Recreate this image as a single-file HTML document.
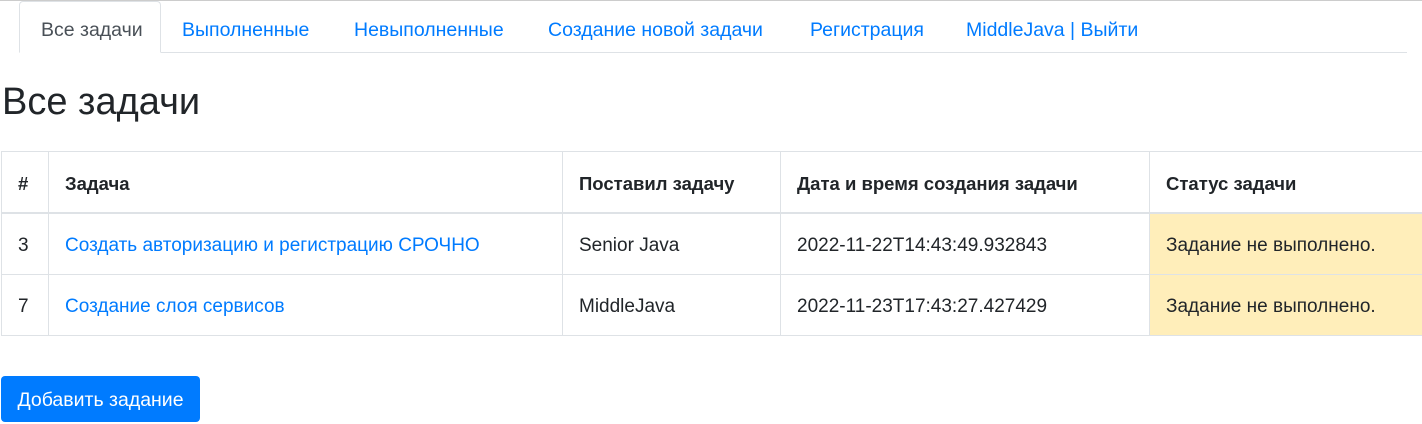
<!DOCTYPE html>
<html><head><meta charset="utf-8"><style>
body{margin:0;width:1422px;height:424px;overflow:hidden;background:#fff;font-family:"Liberation Sans","DejaVu Sans",sans-serif;color:#212529;font-size:16px;position:relative}
.topline{position:absolute;left:0;top:0;width:1422px;height:1px;background:#ccc}
.navb{position:absolute;left:19px;top:52px;width:1388px;height:1px;background:#dee2e6}
.act{position:absolute;left:19px;top:1px;width:142px;height:52px;border:1px solid #dee2e6;border-bottom:1px solid #fff;border-radius:4px 4px 0 0;background:#fff;box-sizing:border-box}
.t{position:absolute;top:19px;font-size:19.5px;color:#007bff;white-space:nowrap;line-height:22px}
h1{position:absolute;left:2px;top:79px;margin:0;font-size:38px;font-weight:400;line-height:46px}
table{position:absolute;left:1px;top:151px;border-collapse:collapse;font-size:19px;table-layout:fixed;width:1448px}
td,th{border:1px solid #dee2e6;padding:3px 0 0 16px;height:57px;text-align:left;white-space:nowrap;overflow:hidden}
th{border-bottom:2px solid #dee2e6;font-weight:700;font-size:18.5px}
a{color:#007bff;text-decoration:none}
.w{background:#ffeeba}
.btn{position:absolute;left:1px;top:376px;width:199px;height:46px;background:#007bff;color:#fff;border-radius:4px;font-size:19.5px;line-height:48px;text-align:center}
</style></head><body>
<div class="topline"></div>
<div class="navb"></div>
<div class="act"></div>
<div class="t" style="left:41px;color:#495057">Все задачи</div>
<div class="t" style="left:182px">Выполненные</div>
<div class="t" style="left:354px">Невыполненные</div>
<div class="t" style="left:548px">Создание новой задачи</div>
<div class="t" style="left:810px">Регистрация</div>
<div class="t" style="left:966px">MiddleJava | Выйти</div>
<h1>Все задачи</h1>
<table>
<colgroup><col style="width:47px"><col style="width:514px"><col style="width:218px"><col style="width:369px"><col style="width:300px"></colgroup>
<tr><th style="height:56px">#</th><th>Задача</th><th>Поставил задачу</th><th>Дата и время создания задачи</th><th>Статус задачи</th></tr>
<tr><td>3</td><td><a>Создать авторизацию и регистрацию СРОЧНО</a></td><td>Senior Java</td><td>2022-11-22T14:43:49.932843</td><td class="w">Задание не выполнено.</td></tr>
<tr><td>7</td><td><a>Создание слоя сервисов</a></td><td>MiddleJava</td><td>2022-11-23T17:43:27.427429</td><td class="w">Задание не выполнено.</td></tr>
</table>
<div class="btn">Добавить задание</div>
</body></html>
